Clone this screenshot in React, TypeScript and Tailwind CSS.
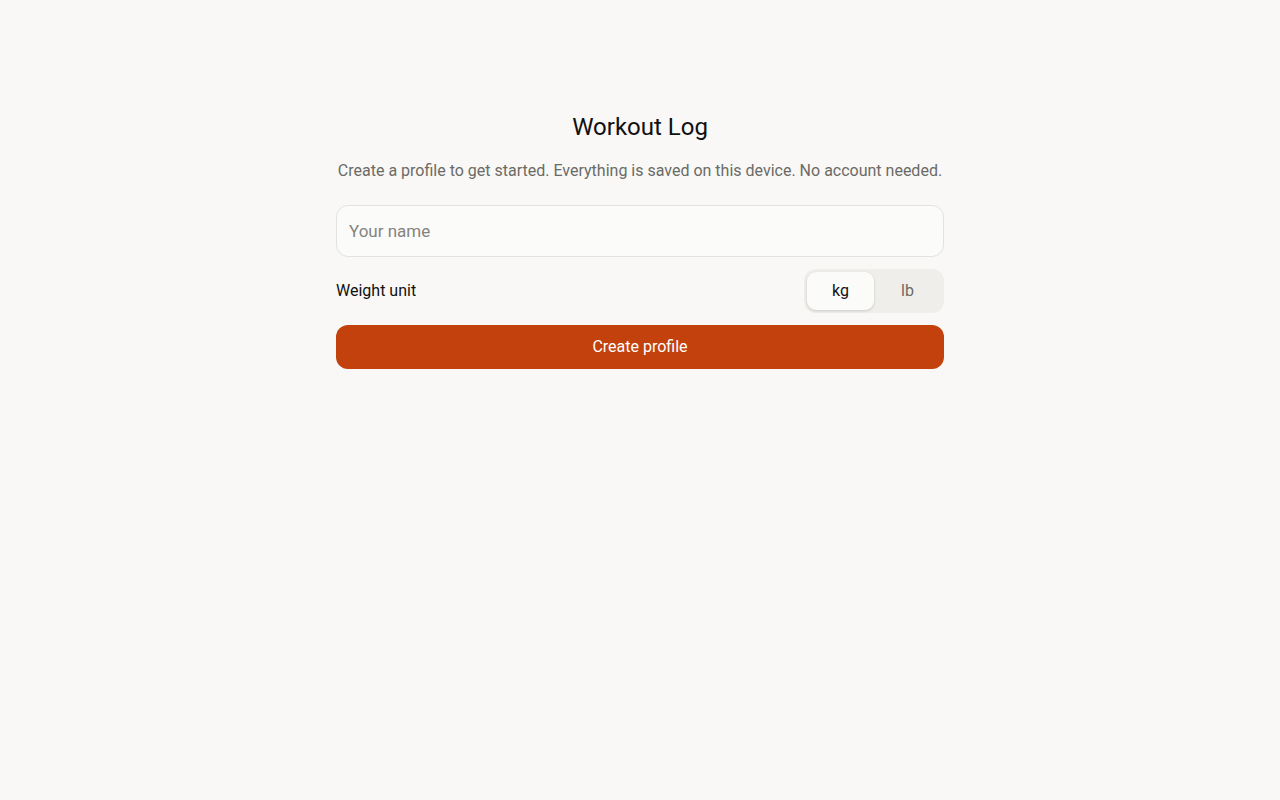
import React, { useState } from "react";

export default function App() {
  const [unit, setUnit] = useState<"kg" | "lb">("kg");
  return (
    <div
      className="min-h-screen w-full bg-[#f9f8f6] text-[#111]"
      style={{ fontFamily: 'Roboto, "Liberation Sans", Arial, sans-serif' }}
    >
      <div className="mx-auto w-[608px] pt-[111px] flex flex-col">
        <h1 className="text-center text-[24px] leading-[32px] font-normal text-[#111]">Workout Log</h1>
        <p className="mt-[16px] text-center text-[16px] leading-[24px] text-[#6b6b66]">
          Create a profile to get started. Everything is saved on this device. No account needed.
        </p>
        <input
          className="mt-[22px] h-[52px] w-full rounded-[12px] border border-[#e4e2dd] bg-[#fbfbfa] px-[12px] text-[17px] text-[#111] placeholder:text-[#85837e] outline-none"
          placeholder="Your name"
        />
        <div className="mt-[12px] flex items-center justify-between h-[44px]">
          <span className="text-[16px] text-[#111]">Weight unit</span>
          <div className="flex h-[44px] w-[140px] rounded-[12px] bg-[#efeeea] p-[3px]">
            <button
              onClick={() => setUnit("kg")}
              className={`flex-1 rounded-[9px] text-[16px] ${unit === "kg" ? "bg-[#fbfbfa] text-[#111] shadow-[0_1px_3px_rgba(0,0,0,0.15)]" : "text-[#6b6b66]"}`}
            >
              kg
            </button>
            <button
              onClick={() => setUnit("lb")}
              className={`flex-1 rounded-[9px] text-[16px] ${unit === "lb" ? "bg-[#fbfbfa] text-[#111] shadow-[0_1px_3px_rgba(0,0,0,0.15)]" : "text-[#6b6b66]"}`}
            >
              lb
            </button>
          </div>
        </div>
        <button className="mt-[12px] h-[44px] w-full rounded-[12px] bg-[#c2410c] text-[16px] text-white">
          Create profile
        </button>
      </div>
    </div>
  );
}
